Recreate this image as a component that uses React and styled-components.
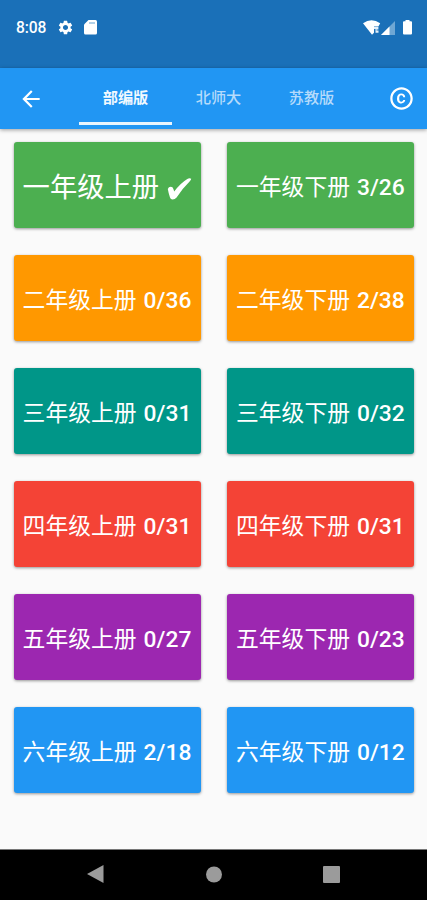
import React from "react";
import styled, { createGlobalStyle } from "styled-components";
import { MdArrowBack, MdCopyright, MdSettings } from "react-icons/md";

const GlobalStyle = createGlobalStyle`
  *, *::before, *::after { box-sizing: border-box; }
  body { margin: 0; background: #fafafa; }
`;

const Screen = styled.div`
  display: flex;
  flex-direction: column;
  width: 427px;
  height: 900px;
  overflow: hidden;
  background: #fafafa;
  font-family: Roboto, "Noto Sans CJK SC", sans-serif;
  color: #fff;
`;

const StatusBar = styled.header`
  display: flex;
  flex: none;
  align-items: flex-start;
  justify-content: space-between;
  height: 68px;
  padding: 19px 15px 0 16px;
  background: #1a70b8;
`;

const StatusGroup = styled.div`
  display: flex;
  align-items: center;
  height: 17px;
  gap: ${(p) => p.$gap}px;
`;

const Clock = styled.time`
  width: 30px;
  padding-top: 2px;
  font-size: 15.6px;
  font-weight: 500;
  line-height: 17px;
  letter-spacing: -0.1px;
  white-space: nowrap;
`;

const BatterySlot = styled.span`
  display: flex;
  margin-left: 8px;
`;

const AppBar = styled.nav`
  display: flex;
  flex: none;
  align-items: center;
  height: 61px;
  background: #2196f3;
  box-shadow: 0 1px 4px rgba(0, 0, 0, 0.38);
`;

const BarButton = styled.button`
  display: flex;
  align-items: center;
  justify-content: center;
  flex: none;
  width: ${(p) => p.$width}px;
  height: 61px;
  padding: 0;
  border: 0;
  background: none;
  color: #fff;
  font-size: ${(p) => p.$icon}px;
`;

const TabList = styled.div`
  display: flex;
  flex: 1;
  height: 100%;
  padding-left: 17px;
`;

const Tab = styled.button`
  display: flex;
  align-items: center;
  justify-content: center;
  width: 93px;
  height: 57px;
  padding: 5px 0 0;
  border: 0;
  border-bottom: 3px solid ${(p) => (p.$active ? "#e9f5fd" : "transparent")};
  background: none;
  color: ${(p) => (p.$active ? "#f1f9ff" : "#b5dbfb")};
  font-family: inherit;
  font-size: 15.2px;
  font-weight: ${(p) => (p.$active ? 700 : 500)};
  line-height: 20px;
`;

const BookGrid = styled.main`
  display: grid;
  flex: 1;
  grid-template-columns: 187px 187px;
  grid-auto-rows: 86px;
  align-content: start;
  gap: 27px 26.4px;
  padding: 13px 0 0 13.6px;
`;

const BookCard = styled.button`
  display: flex;
  align-items: center;
  justify-content: flex-start;
  padding: ${(p) => (p.$large ? 6 : 5)}px 0 0 9px;
  border: 0;
  border-radius: 3px;
  background: ${(p) => p.$color};
  box-shadow: 0 1px 3px rgba(0, 0, 0, 0.4);
  color: #fff;
  font-family: inherit;
  font-size: ${(p) => (p.$large ? 27.3 : 22.8)}px;
  line-height: 32px;
  white-space: nowrap;
`;

const Count = styled.span`
  margin-left: 7px;
  font-size: 22.8px;
  font-weight: 500;
`;

const CheckMark = styled.svg`
  width: 25px;
  height: 24px;
  margin: 1px 0 0 8px;
`;

const SystemNav = styled.footer`
  display: flex;
  flex: none;
  align-items: center;
  justify-content: space-between;
  height: 51px;
  padding: 0 87px 2px 87px;
  border-top: 1px solid #777;
  background: #000;
`;

const SdIcon = () => (
  <svg width="13" height="15" viewBox="0 0 13 15">
    <path d="M4.5 0H11.5Q13 0 13 1.5V13Q13 14.5 11.5 14.5H1.5Q0 14.5 0 13V4.5Z" fill="#fff" />
    <path d="M5 3H11" stroke="#a9cbe6" strokeWidth="1.8" />
  </svg>
);

const WifiIcon = () => (
  <svg width="18" height="15" viewBox="0 0 18 15">
    <path d="M0 3.2Q8.5 -2.8 17.2 3.2L15.4 6.5H11V12.8L9 14.8Z" fill="#fff" />
    <path d="M11 7H15.4V9.5H13.5V10.5H15.5V12.8H12.5V9H11Z" fill="#e3effa" />
  </svg>
);

const SignalIcon = () => (
  <svg width="14" height="14" viewBox="0 0 14 14">
    <path d="M14 0V14H0Z" fill="#6fa7d4" />
    <path d="M8.5 5.5V14H0Z" fill="#fff" />
  </svg>
);

const BatteryIcon = () => (
  <svg width="9" height="15" viewBox="0 0 9 15">
    <path d="M2.5 0H6.5V1.2H8Q9 1.2 9 2.2V13.5Q9 14.5 8 14.5H1Q0 14.5 0 13.5V2.2Q0 1.2 1 1.2H2.5Z" fill="#fff" />
  </svg>
);

const tabs = ["部编版", "北师大", "苏教版"];

const books = [
  { title: "一年级上册", done: true, color: "#4caf50" },
  { title: "一年级下册", count: "3/26", color: "#4caf50" },
  { title: "二年级上册", count: "0/36", color: "#ff9800" },
  { title: "二年级下册", count: "2/38", color: "#ff9800" },
  { title: "三年级上册", count: "0/31", color: "#009688" },
  { title: "三年级下册", count: "0/32", color: "#009688" },
  { title: "四年级上册", count: "0/31", color: "#f44336" },
  { title: "四年级下册", count: "0/31", color: "#f44336" },
  { title: "五年级上册", count: "0/27", color: "#9c27b0" },
  { title: "五年级下册", count: "0/23", color: "#9c27b0" },
  { title: "六年级上册", count: "2/18", color: "#2196f3" },
  { title: "六年级下册", count: "0/12", color: "#2196f3" },
];

export default function App() {
  return (
    <Screen>
      <GlobalStyle />
      <StatusBar>
        <StatusGroup $gap={10.5}>
          <Clock>8:08</Clock>
          <MdSettings size={17} />
          <SdIcon />
        </StatusGroup>
        <StatusGroup $gap={0}>
          <WifiIcon />
          <SignalIcon />
          <BatterySlot>
            <BatteryIcon />
          </BatterySlot>
        </StatusGroup>
      </StatusBar>
      <AppBar>
        <BarButton $width={62} $icon={26} aria-label="Back">
          <MdArrowBack />
        </BarButton>
        <TabList>
          {tabs.map((name, i) => (
            <Tab key={name} $active={i === 0}>{name}</Tab>
          ))}
        </TabList>
        <BarButton $width={51} $icon={27} aria-label="Copyright">
          <MdCopyright />
        </BarButton>
      </AppBar>
      <BookGrid>
        {books.map((book) => (
          <BookCard key={book.title} $color={book.color} $large={book.done}>
            {book.title}
            {book.done ? (
              <CheckMark viewBox="0 0 25 24">
                <path d="M0.8 12Q1.6 9.8 3.8 9.8Q5.8 9.8 6.4 12L7.2 14.6Q13 6.5 20.3 2Q22.5 0.8 24.2 1.8Q24.2 3 22.6 4.6Q15.5 11.5 9.6 20.6Q8 22.6 5.6 22.6Q3.6 22.6 3 20.6Q1.5 16 0.8 12Z" fill="#fff" />
              </CheckMark>
            ) : (
              <Count>{book.count}</Count>
            )}
          </BookCard>
        ))}
      </BookGrid>
      <SystemNav>
        <svg width="17" height="18" viewBox="0 0 17 18">
          <path d="M16.5 0V18L0 9Z" fill="#9b9b9b" />
        </svg>
        <svg width="17" height="17" viewBox="0 0 17 17">
          <circle cx="9" cy="8.5" r="8" fill="#9b9b9b" />
        </svg>
        <svg width="17" height="17" viewBox="0 0 17 17">
          <rect width="17" height="17" rx="1" fill="#9b9b9b" />
        </svg>
      </SystemNav>
    </Screen>
  );
}
